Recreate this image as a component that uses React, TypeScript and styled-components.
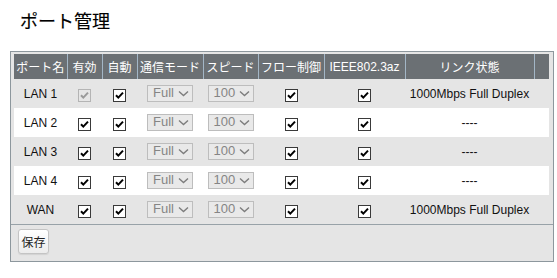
import React from "react";
import styled, { createGlobalStyle } from "styled-components";

const Global = createGlobalStyle`
  html, body { margin: 0; padding: 0; background: #ffffff; }
  body {
    font-family: "Liberation Sans", "Noto Sans CJK JP", sans-serif;
    color: #000;
  }
`;

const Page = styled.div`
  padding: 8px 4px 0 10px;
  width: 544px;
`;

const Title = styled.h1`
  margin: 0 0 0 10px;
  height: 43px;
  font-family: "Noto Sans CJK JP", sans-serif;
  font-weight: 400;
  font-size: 18px;
  line-height: 25px;
  color: #000;
  -webkit-text-stroke: 0.15px #000;
`;

const Panel = styled.div`
  width: 542px;
  border: 1px solid #8d979d;
  background: #e5e5e5;
`;

const TableWrap = styled.div`
  padding: 2px 4px 0 3px;
`;

const Table = styled.table`
  width: 535px;
  border-collapse: collapse;
  table-layout: fixed;
  font-size: 12px;
`;

const Th = styled.th`
  height: 25px;
  padding: 0;
  background: #6b7074;
  color: #ffffff;
  font-weight: 400;
  font-size: 12px;
  font-family: "Liberation Sans", "Noto Sans CJK JP", sans-serif;
  text-align: center;
  white-space: nowrap;
  border-left: 1px solid #a3b6c6;
  &:first-child { border-left: none; }
`;

const Tr = styled.tr<{ $alt: boolean }>`
  background: ${(p) => (p.$alt ? "#ffffff" : "#e5e5e5")};
`;

const Td = styled.td`
  height: 29px;
  padding: 0;
  text-align: center;
  vertical-align: middle;
  color: #111;
  white-space: nowrap;
`;

const BoxWrap = styled.span`
  display: inline-block;
  width: 13px;
  height: 13px;
  vertical-align: middle;
  margin-top: 3px;
`;

const Check = ({ disabled }: { disabled?: boolean }) => (
  <BoxWrap>
    <svg width="13" height="13" viewBox="0 0 13 13">
      <rect
        x="0.5"
        y="0.5"
        width="12"
        height="12"
        fill={disabled ? "#e6e6e6" : "#ffffff"}
        stroke={disabled ? "#b4b4b4" : "#3a3a3a"}
      />
      <path
        d="M3 6.2 L5.3 8.6 L10 3.6"
        fill="none"
        stroke={disabled ? "#9a9a9a" : "#000000"}
        strokeWidth="2"
      />
    </svg>
  </BoxWrap>
);

const SelectBox = styled.span<{ $w: number }>`
  display: inline-flex;
  align-items: center;
  justify-content: space-between;
  box-sizing: border-box;
  width: ${(p) => p.$w}px;
  height: 17px;
  padding: 0 3px 1px 5px;
  border: 1px solid #bdbdbd;
  background: #e9e9e9;
  color: #858585;
  font-size: 13px;
  line-height: 14px;
  vertical-align: middle;
`;

const Chevron = () => (
  <svg width="11" height="7" viewBox="0 0 11 7">
    <path d="M1 1.5 L5.5 5.5 L10 1.5" fill="none" stroke="#7d7d7d" strokeWidth="1.4" />
  </svg>
);

const Select = ({ value, w }: { value: string; w: number }) => (
  <SelectBox $w={w}>
    <span>{value}</span>
    <Chevron />
  </SelectBox>
);

const Footer = styled.div`
  border-top: 1px solid #98a2a8;
  padding: 4px 7px 7px 7px;
`;

const Button = styled.button`
  box-sizing: border-box;
  width: 31px;
  height: 25px;
  padding: 0;
  border: 1px solid #c4c4c4;
  border-radius: 3px;
  background: linear-gradient(#ffffff, #ececec);
  color: #222;
  font-family: "Noto Sans CJK JP", sans-serif;
  font-size: 12px;
  box-shadow: 0 1px 1px rgba(0, 0, 0, 0.08);
`;

const cols = [53, 35, 35, 66, 55, 66, 81, 129, 15];
const headers = ["ポート名", "有効", "自動", "通信モード", "スピード", "フロー制御", "IEEE802.3az", "リンク状態", ""];

const rows = [
  { name: "LAN 1", enDisabled: true, link: "1000Mbps Full Duplex" },
  { name: "LAN 2", enDisabled: false, link: "----" },
  { name: "LAN 3", enDisabled: false, link: "----" },
  { name: "LAN 4", enDisabled: false, link: "----" },
  { name: "WAN", enDisabled: false, link: "1000Mbps Full Duplex" },
];

export default function App() {
  return (
    <>
      <Global />
      <Page>
        <Title>ポート管理</Title>
        <Panel>
          <TableWrap>
            <Table>
              <colgroup>
                {cols.map((w, i) => (
                  <col key={i} style={{ width: w }} />
                ))}
              </colgroup>
              <thead>
                <tr>
                  {headers.map((h, i) => (
                    <Th key={i}>{h}</Th>
                  ))}
                </tr>
              </thead>
              <tbody>
                {rows.map((r, i) => (
                  <Tr key={r.name} $alt={i % 2 === 1}>
                    <Td>{r.name}</Td>
                    <Td>
                      <Check disabled={r.enDisabled} />
                    </Td>
                    <Td>
                      <Check />
                    </Td>
                    <Td>
                      <Select value="Full" w={46} />
                    </Td>
                    <Td>
                      <Select value="100" w={46} />
                    </Td>
                    <Td>
                      <Check />
                    </Td>
                    <Td>
                      <Check />
                    </Td>
                    <Td>{r.link}</Td>
                    <Td />
                  </Tr>
                ))}
              </tbody>
            </Table>
          </TableWrap>
          <Footer>
            <Button>保存</Button>
          </Footer>
        </Panel>
      </Page>
    </>
  );
}
